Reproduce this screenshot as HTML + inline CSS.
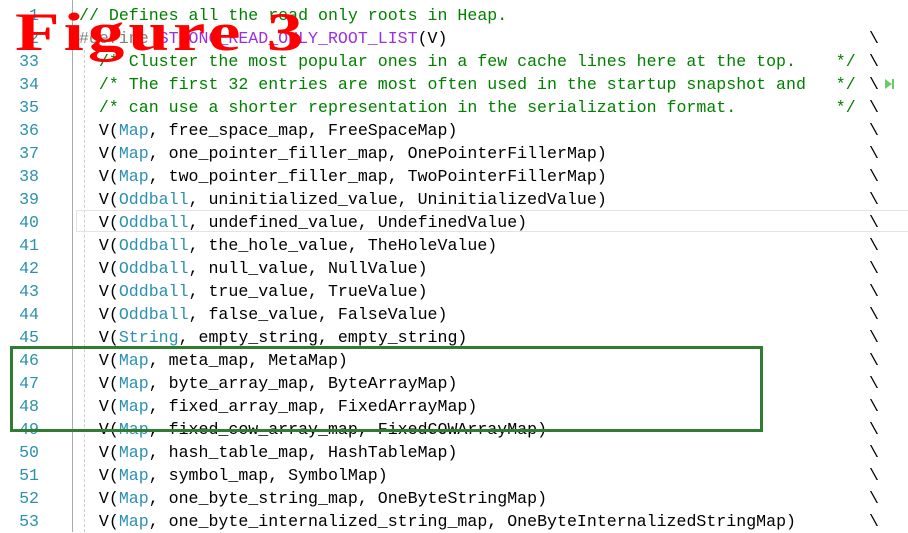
<!DOCTYPE html>
<html><head><meta charset="utf-8"><style>
body{margin:0;width:908px;height:532px;background:#fff;position:relative;overflow:hidden;font-family:"Liberation Mono",monospace;font-size:16.6px}
.ln{position:absolute;left:0;width:39px;text-align:right;color:#2b91af;height:23px;line-height:23px}
.c{position:absolute;left:79px;white-space:pre;height:23px;line-height:23px;color:#000}
.bs{position:absolute;left:869px;height:23px;line-height:23px}
.g{color:#008000}.t{color:#2b91af}.p{color:#9b30e0}.gr{color:#808080}
</style></head><body>
<div style="position:absolute;left:72px;top:0;width:1px;height:532px;background:#aaa"></div>
<div style="position:absolute;left:84px;top:50px;width:0;height:482px;border-left:1px dashed #ccc"></div>
<div style="position:absolute;left:76px;top:210px;width:840px;height:22px;border:1px solid #e2e2ea;box-sizing:border-box"></div>

<div class="ln" style="top:4px">1</div><div class="c g" style="top:4px">// Defines all the read only roots in Heap.</div>
<div class="ln" style="top:27px">2</div><div class="c" style="top:27px"><span class="gr">#define</span> <span class="p">STRONG_READ_ONLY_ROOT_LIST</span>(V)</div><div class="bs" style="top:27px">\</div>
<div class="ln" style="top:50px">33</div><div class="c g" style="top:50px">  /* Cluster the most popular ones in a few cache lines here at the top.    */</div><div class="bs" style="top:50px">\</div>
<div class="ln" style="top:73px">34</div><div class="c g" style="top:73px">  /* The first 32 entries are most often used in the startup snapshot and   */</div><div class="bs" style="top:73px">\</div>
<div style="position:absolute;left:885px;top:79px;width:0;height:0;border-left:7px solid #6c6;border-top:5px solid transparent;border-bottom:5px solid transparent"></div>
<div style="position:absolute;left:892px;top:79px;width:2px;height:10px;background:#6c6"></div>
<div class="ln" style="top:96px">35</div><div class="c g" style="top:96px">  /* can use a shorter representation in the serialization format.          */</div><div class="bs" style="top:96px">\</div>

<div class="ln" style="top:119px">36</div><div class="c" style="top:119px">  V(<span class="t">Map</span>, free_space_map, FreeSpaceMap)</div><div class="bs" style="top:119px">\</div>
<div class="ln" style="top:142px">37</div><div class="c" style="top:142px">  V(<span class="t">Map</span>, one_pointer_filler_map, OnePointerFillerMap)</div><div class="bs" style="top:142px">\</div>
<div class="ln" style="top:165px">38</div><div class="c" style="top:165px">  V(<span class="t">Map</span>, two_pointer_filler_map, TwoPointerFillerMap)</div><div class="bs" style="top:165px">\</div>
<div class="ln" style="top:188px">39</div><div class="c" style="top:188px">  V(<span class="t">Oddball</span>, uninitialized_value, UninitializedValue)</div><div class="bs" style="top:188px">\</div>
<div class="ln" style="top:211px">40</div><div class="c" style="top:211px">  V(<span class="t">Oddball</span>, undefined_value, UndefinedValue)</div><div class="bs" style="top:211px">\</div>
<div class="ln" style="top:234px">41</div><div class="c" style="top:234px">  V(<span class="t">Oddball</span>, the_hole_value, TheHoleValue)</div><div class="bs" style="top:234px">\</div>
<div class="ln" style="top:257px">42</div><div class="c" style="top:257px">  V(<span class="t">Oddball</span>, null_value, NullValue)</div><div class="bs" style="top:257px">\</div>
<div class="ln" style="top:280px">43</div><div class="c" style="top:280px">  V(<span class="t">Oddball</span>, true_value, TrueValue)</div><div class="bs" style="top:280px">\</div>
<div class="ln" style="top:303px">44</div><div class="c" style="top:303px">  V(<span class="t">Oddball</span>, false_value, FalseValue)</div><div class="bs" style="top:303px">\</div>
<div class="ln" style="top:326px">45</div><div class="c" style="top:326px">  V(<span class="t">String</span>, empty_string, empty_string)</div><div class="bs" style="top:326px">\</div>
<div class="ln" style="top:349px">46</div><div class="c" style="top:349px">  V(<span class="t">Map</span>, meta_map, MetaMap)</div><div class="bs" style="top:349px">\</div>
<div class="ln" style="top:372px">47</div><div class="c" style="top:372px">  V(<span class="t">Map</span>, byte_array_map, ByteArrayMap)</div><div class="bs" style="top:372px">\</div>
<div class="ln" style="top:395px">48</div><div class="c" style="top:395px">  V(<span class="t">Map</span>, fixed_array_map, FixedArrayMap)</div><div class="bs" style="top:395px">\</div>
<div class="ln" style="top:418px">49</div><div class="c" style="top:418px">  V(<span class="t">Map</span>, fixed_cow_array_map, FixedCOWArrayMap)</div><div class="bs" style="top:418px">\</div>
<div class="ln" style="top:441px">50</div><div class="c" style="top:441px">  V(<span class="t">Map</span>, hash_table_map, HashTableMap)</div><div class="bs" style="top:441px">\</div>
<div class="ln" style="top:464px">51</div><div class="c" style="top:464px">  V(<span class="t">Map</span>, symbol_map, SymbolMap)</div><div class="bs" style="top:464px">\</div>
<div class="ln" style="top:487px">52</div><div class="c" style="top:487px">  V(<span class="t">Map</span>, one_byte_string_map, OneByteStringMap)</div><div class="bs" style="top:487px">\</div>
<div class="ln" style="top:510px">53</div><div class="c" style="top:510px">  V(<span class="t">Map</span>, one_byte_internalized_string_map, OneByteInternalizedStringMap)</div><div class="bs" style="top:510px">\</div>

<div style="position:absolute;left:10px;top:346px;width:753px;height:86px;border:3px solid #2e7d32;box-sizing:border-box"></div>
<div style="position:absolute;left:15px;top:5px;font-family:'Liberation Serif',serif;font-weight:bold;font-size:54px;line-height:54px;letter-spacing:3px;color:#f00;white-space:nowrap;transform-origin:0 0;transform:scaleX(1.35)">Figure 3</div>
</body></html>
